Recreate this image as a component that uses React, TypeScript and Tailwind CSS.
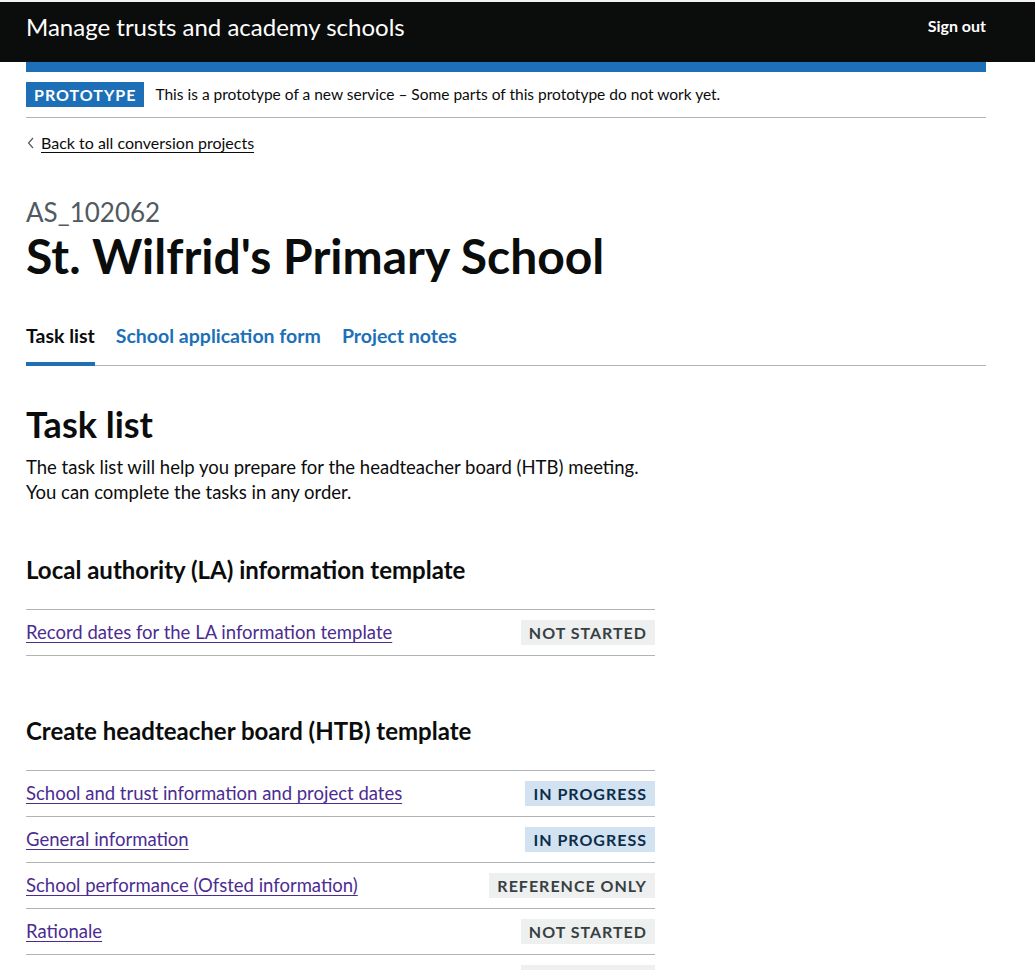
import React from 'react';

type Status = 'not-started' | 'in-progress' | 'reference';

interface Task {
  label: string;
  status: Status;
}

const laTasks: Task[] = [{ label: 'Record dates for the LA information template', status: 'not-started' }];

const htbTasks: Task[] = [
  { label: 'School and trust information and project dates', status: 'in-progress' },
  { label: 'General information', status: 'in-progress' },
  { label: 'School performance (Ofsted information)', status: 'reference' },
  { label: 'Rationale', status: 'not-started' },
  { label: 'Risks and issues', status: 'not-started' },
];

const StatusTag: React.FC<{ status: Status }> = ({ status }) => {
  if (status === 'in-progress') {
    return (
      <span className="bg-[#d2e2f1] text-[#0c2d4a] px-2 h-[25px] flex items-center text-[16px] font-bold uppercase tracking-[1px]">
        In progress
      </span>
    );
  }
  if (status === 'reference') {
    return (
      <span className="bg-[#eeefef] text-[#383f43] px-2 h-[25px] flex items-center text-[16px] font-bold uppercase tracking-[1px]">
        Reference only
      </span>
    );
  }
  return (
    <span className="bg-[#eeefef] text-[#383f43] px-2 h-[25px] flex items-center text-[16px] font-bold uppercase tracking-[1px]">
      Not started
    </span>
  );
};

const TaskRows: React.FC<{ tasks: Task[] }> = ({ tasks }) => (
  <ul className="border-t border-[#b1b4b6]">
    {tasks.map((task) => (
      <li key={task.label} className="flex items-center justify-between h-[46px] border-b border-[#b1b4b6]">
        <a href="#" className="text-[18.5px] text-[#4c2c92] underline underline-offset-[3px] decoration-1">
          {task.label}
        </a>
        <StatusTag status={task.status} />
      </li>
    ))}
  </ul>
);

export default function App() {
  return (
    <div className="min-h-[970px] bg-white text-[#0b0c0c] font-['Lato',sans-serif] border-t-2 border-[#f3f2f1]">
      {/* Header */}
      <header className="bg-[#0b0c0c] h-[60px]">
        <div className="ml-[26px] w-[960px] h-full flex items-center justify-between">
          <span className="text-white text-[24px] leading-none -mt-[10px]">Manage trusts and academy schools</span>
          <a href="#" className="text-white text-[16px] font-bold -mt-[12px]">Sign out</a>
        </div>
      </header>

      <div className="ml-[26px] w-[960px]">
        <div className="h-[10px] bg-[#1d70b8]" />

        {/* Phase banner */}
        <div className="flex items-center gap-[11px] pt-[10px] pb-[10px] border-b border-[#b1b4b6]">
          <strong className="bg-[#1d70b8] text-white h-[25px] px-2 flex items-center text-[16px] font-bold uppercase tracking-[1px]">
            Prototype
          </strong>
          <span className="text-[15.5px]">This is a prototype of a new service – Some parts of this prototype do not work yet.</span>
        </div>

        {/* Back link */}
        <a href="#" className="mt-[13px] flex items-center gap-[6px] text-[16px] text-[#0b0c0c] w-fit">
          <svg width="8" height="12" viewBox="0 0 8 12" className="ml-[1px]">
            <path d="M6 1 L1.5 6 L6 11" fill="none" stroke="#505a5f" strokeWidth="1.2" />
          </svg>
          <span className="underline underline-offset-[3px] decoration-1">Back to all conversion projects</span>
        </a>

        {/* Title */}
        <div className="mt-[42px] text-[26px] text-[#505a5f] leading-[30px]">AS_102062</div>
        <h1 className="text-[48px] font-bold leading-[50px] mt-[4px]">St. Wilfrid's Primary School</h1>

        {/* Tabs */}
        <nav className="mt-[40px] flex gap-[21px] border-b border-[#b1b4b6]">
          <a href="#" className="text-[19.5px] font-bold pb-[12px] border-b-[4px] border-[#1d70b8] -mb-px">Task list</a>
          <a href="#" className="text-[19.5px] font-bold text-[#1d70b8] pb-[12px]">School application form</a>
          <a href="#" className="text-[19.5px] font-bold text-[#1d70b8] pb-[12px]">Project notes</a>
        </nav>

        {/* Task list */}
        <h2 className="mt-[38px] text-[36px] font-bold leading-[40px]">Task list</h2>
        <p className="mt-[11px] text-[18.5px] leading-[25px]">
          The task list will help you prepare for the headteacher board (HTB) meeting.
          <br />
          You can complete the tasks in any order.
        </p>

        <div className="w-[629px]">
          <h3 className="mt-[50px] text-[24px] font-bold leading-[30px]">Local authority (LA) information template</h3>
          <div className="mt-[24px]">
            <TaskRows tasks={laTasks} />
          </div>

          <h3 className="mt-[60px] text-[24px] font-bold leading-[30px]">Create headteacher board (HTB) template</h3>
          <div className="mt-[24px]">
            <TaskRows tasks={htbTasks} />
          </div>
        </div>
      </div>
    </div>
  );
}
